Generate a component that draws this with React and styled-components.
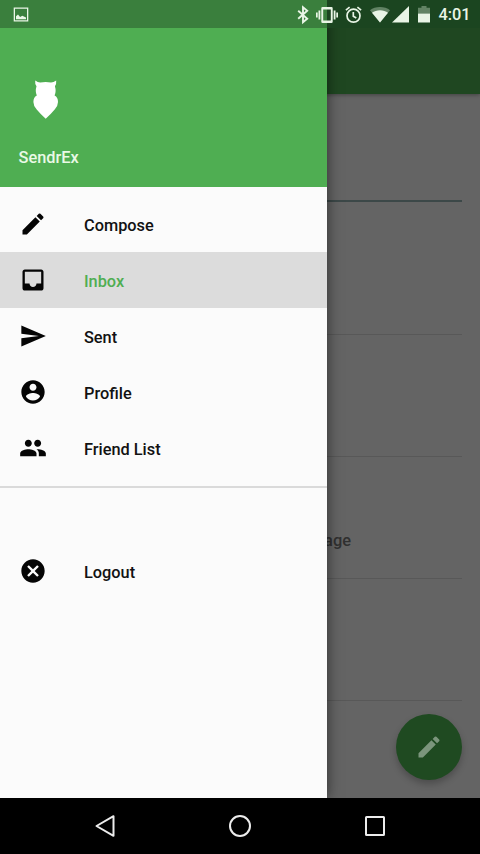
import React from "react";
import styled, { createGlobalStyle, css } from "styled-components";

const GlobalStyle = createGlobalStyle`
  *, *::before, *::after { box-sizing: border-box; }
  body { margin: 0; background: #000; }
`;

const Screen = styled.div`
  width: 480px;
  height: 854px;
  display: flex;
  flex-direction: column;
  overflow: hidden;
  font-family: Roboto, "Noto Sans", sans-serif;
  background: #000;
`;

const Stage = styled.div`
  position: relative;
  flex: none;
  height: 798px;
  overflow: hidden;
`;

const Page = styled.main`
  height: 100%;
  display: flex;
  flex-direction: column;
  background: #646464;
`;

const Toolbar = styled.header`
  flex: none;
  height: 94px;
  background: #1f4721;
  box-shadow: 0 1px 4px rgba(0, 0, 0, 0.35);
`;

const Field = styled.div`
  flex: none;
  height: ${(p) => p.$height}px;
  margin: 0 18px 0 19px;
  padding-bottom: 27px;
  display: flex;
  flex-direction: column;
  justify-content: flex-end;
  align-items: flex-end;
  border-bottom: 1px solid #585858;
  ${(p) =>
    p.$active &&
    css`
      border-bottom: 2px solid #3c4848;
    `}
`;

const FieldLabel = styled.span`
  margin-right: 111px;
  font-size: 16.4px;
  line-height: 20px;
  font-weight: 500;
  color: #303030;
`;

const Fab = styled.button`
  position: absolute;
  right: 18.5px;
  bottom: 18.5px;
  width: 66px;
  height: 66px;
  padding: 0;
  border: 0;
  border-radius: 50%;
  display: grid;
  place-items: center;
  background: #1f4a21;
  box-shadow: 0 4px 7px rgba(0, 0, 0, 0.24);
`;

const Drawer = styled.aside`
  position: absolute;
  top: 0;
  left: 0;
  bottom: 0;
  width: 326.6px;
  display: flex;
  flex-direction: column;
  background: #fbfbfb;
  box-shadow: 0 0 13px rgba(0, 0, 0, 0.55);
`;

const Brand = styled.div`
  flex: none;
  height: 187px;
  padding: 80px 18.6px 0;
  display: flex;
  flex-direction: column;
  background: #4fae52;
`;

const Owl = styled.svg`
  flex: none;
  width: 26px;
  height: 40px;
  margin-left: 14px;
`;

const BrandName = styled.div`
  margin-top: 28px;
  font-size: 16.33px;
  line-height: 20px;
  font-weight: 500;
  color: #e9f9e5;
`;

const Menu = styled.nav`
  padding-top: 9px;
`;

const Item = styled.a`
  height: 56px;
  padding-left: 18.67px;
  display: flex;
  align-items: center;
  gap: 37.33px;
  color: ${(p) => (p.$selected ? "#4fae52" : "#121212")};
  background: ${(p) => (p.$selected ? "#dcdcdc" : "transparent")};
`;

const ItemLabel = styled.span`
  padding-top: 3px;
  font-size: 16.33px;
  line-height: 20px;
  font-weight: 500;
`;

const Divider = styled.hr`
  width: 100%;
  height: 1.5px;
  margin: 10px 0 55.5px;
  border: 0;
  background: #dadada;
`;

const Icon = styled.svg`
  flex: none;
  width: 28px;
  height: 28px;
  fill: ${(p) => p.$color || "#050505"};
`;

const StatusBar = styled.div`
  position: absolute;
  top: 0;
  left: 0;
  right: 0;
  height: 28px;
  padding: 1px 9.5px 0 12px;
  display: flex;
  align-items: center;
  background: linear-gradient(to right, #3a7f3d 326.6px, #1b4520 326.6px);
`;

const StatusIcons = styled.div`
  margin-left: auto;
  display: flex;
  align-items: center;
`;

const StatusGlyph = styled.svg`
  flex: none;
  width: ${(p) => p.$w}px;
  height: 20px;
  margin-right: ${(p) => p.$gap || 0}px;
  fill: #e9f5e6;
`;

const Clock = styled.span`
  width: 32px;
  padding-top: 1px;
  font-size: 16.33px;
  line-height: 20px;
  font-weight: 500;
  color: #e9f5e6;
  white-space: nowrap;
`;

const NavBar = styled.footer`
  flex: 1;
  padding: 0 37.5px;
  display: grid;
  grid-template-columns: repeat(3, 1fr);
  place-items: center;
  background: #000;
`;

const NavGlyph = styled.svg`
  width: 28px;
  height: 28px;
  fill: none;
  stroke: #ececec;
  stroke-width: 2;
  stroke-linejoin: round;
`;

const PATHS = {
  edit: "M3 17.25V21h3.75L17.81 9.94l-3.75-3.75L3 17.25zM20.71 7.04a1 1 0 0 0 0-1.41l-2.34-2.34a1 1 0 0 0-1.41 0l-1.83 1.83 3.75 3.75 1.83-1.83z",
  inbox:
    "M19 3H4.99C3.88 3 3.01 3.89 3.01 5L3 19c0 1.1.88 2 1.99 2H19c1.1 0 2-.9 2-2V5c0-1.11-.9-2-2-2zm0 12h-4c0 1.66-1.35 3-3 3s-3-1.34-3-3H4.99V5H19v10z",
  send: "M2.01 21L23 12 2.01 3 2 10l15 2-15 2z",
  profile:
    "M12 2C6.48 2 2 6.48 2 12s4.48 10 10 10 10-4.48 10-10S17.52 2 12 2zm0 3c1.66 0 3 1.34 3 3s-1.34 3-3 3-3-1.34-3-3 1.34-3 3-3zm0 14.2c-2.5 0-4.71-1.28-6-3.22.03-1.99 4-3.08 6-3.08 1.99 0 5.97 1.09 6 3.08-1.29 1.94-3.5 3.22-6 3.22z",
  group:
    "M16 11c1.66 0 2.99-1.34 2.99-3S17.66 5 16 5s-3 1.34-3 3 1.34 3 3 3zm-8 0c1.66 0 2.99-1.34 2.99-3S9.66 5 8 5 5 6.34 5 8s1.34 3 3 3zm0 2c-2.33 0-7 1.17-7 3.5V19h14v-2.5c0-2.33-4.67-3.5-7-3.5zm8 0c-.29 0-.62.02-.97.05 1.16.84 1.97 1.97 1.97 3.45V19h6v-2.5c0-2.33-4.67-3.5-7-3.5z",
  cancel:
    "M12 2C6.47 2 2 6.47 2 12s4.47 10 10 10 10-4.47 10-10S17.53 2 12 2zm5 13.59L15.59 17 12 13.41 8.41 17 7 15.59 10.59 12 7 8.41 8.41 7 12 10.59 15.59 7 17 8.41 13.41 12 17 15.59z",
};

function Glyph({ name, color }) {
  return (
    <Icon viewBox="0 0 24 24" $color={color} aria-hidden="true">
      <path d={PATHS[name]} />
    </Icon>
  );
}

function MenuItem({ icon, label, selected }) {
  return (
    <Item $selected={selected}>
      <Glyph name={icon} />
      <ItemLabel>{label}</ItemLabel>
    </Item>
  );
}

function Status() {
  return (
    <StatusBar>
      <StatusGlyph $w={18} viewBox="0 0 18 20">
        <path
          fillRule="evenodd"
          d="M1.7 2.500h14.600v14H1.700zM3 3.800v11.400h12V3.800zM4 14.200v-3l2-1.800 2.100 2.500 2.200-1.200 3.700 1.900v1.600z"
        />
      </StatusGlyph>
      <StatusIcons>
        <StatusGlyph $w={12} $gap={7} viewBox="0 0 12 20">
          <path
            fill="none"
            stroke="#e9f5e6"
            strokeWidth="1.900"
            d="M1.200 5.800l9 8L6 17.300V2.300l4.200 3.500-9 8"
          />
        </StatusGlyph>
        <StatusGlyph $w={22} $gap={7} viewBox="0 0 22 20">
          <path
            fillRule="evenodd"
            d="M0 7.500h1.700v5H0zM2.500 5.500h1.800v9H2.500zM17.700 5.500h1.800v9h-1.800zM20.300 7.500H22v5h-1.700zM6.500 2h9q1.200 0 1.200 1.200v13.600q0 1.200-1.200 1.200h-9q-1.200 0-1.200-1.200V3.200q0-1.200 1.200-1.200zM7.200 4.500v11h7.600v-11z"
          />
        </StatusGlyph>
        <StatusGlyph $w={17} $gap={8} viewBox="0 0 17 20">
          <g fill="none" stroke="#e9f5e6" strokeWidth="1.700">
            <circle cx="8.500" cy="10.700" r="6.500" />
            <path d="M8.300 6.900v4.300l3 1.800M.9 5.200l3.700-3M16.100 5.200l-3.700-3" />
          </g>
        </StatusGlyph>
        <StatusGlyph $w={20} $gap={2} viewBox="0 0 20 20">
          <path
            opacity=".35"
            d="M10 17.500L0 5.200C2.600 3.100 6.100 2 10 2s7.400 1.100 10 3.200z"
          />
          <path d="M10 17.500L2 7.700C4.100 6.100 6.900 5.200 10 5.200s5.900.9 8 2.500z" />
        </StatusGlyph>
        <StatusGlyph $w={17} $gap={9} viewBox="0 0 17 20">
          <path d="M0 17.500L17 1V17.500z" />
        </StatusGlyph>
        <StatusGlyph $w={12} $gap={8.5} viewBox="0 0 12 20">
          <path opacity=".35" d="M3.500 1h5v1.800H12V8.500H0V2.800h3.500z" />
          <path d="M0 8.500h12v9H0z" />
        </StatusGlyph>
        <Clock>4:01</Clock>
      </StatusIcons>
    </StatusBar>
  );
}

export default function App() {
  return (
    <Screen>
      <GlobalStyle />
      <Stage>
        <Page>
          <Toolbar />
          <Field $height={108} $active />
          <Field $height={133} />
          <Field $height={122} />
          <Field $height={122}>
            <FieldLabel>Message</FieldLabel>
          </Field>
          <Field $height={122} />
        </Page>
        <Fab aria-label="Compose">
          <Glyph name="edit" color="#7b957c" />
        </Fab>
        <Drawer>
          <Brand>
            <Owl viewBox="0 0 26 40">
              <path
                fill="#fff"
                d="M2.200.6Q4.800 2.600 7.200 2.600Q12.700 1.200 18 2.600Q20.500 2.600 23.200.6Q23.600 4.500 21.900 6.300Q23.500 11.500 21.600 15.500Q25 17.300 25 22Q25 26 21.700 29.400Q17.300 34.600 12.700 38.700Q8.100 34.600 3.700 29.400Q.4 26 .4 22Q.4 17.300 3.800 15.500Q1.900 11.500 3.500 6.300Q1.800 4.500 2.200.6z"
              />
            </Owl>
            <BrandName>SendrEx</BrandName>
          </Brand>
          <Menu>
            <MenuItem icon="edit" label="Compose" />
            <MenuItem icon="inbox" label="Inbox" selected />
            <MenuItem icon="send" label="Sent" />
            <MenuItem icon="profile" label="Profile" />
            <MenuItem icon="group" label="Friend List" />
            <Divider />
            <MenuItem icon="cancel" label="Logout" />
          </Menu>
        </Drawer>
        <Status />
      </Stage>
      <NavBar>
        <NavGlyph viewBox="0 0 28 28">
          <path d="M5.500 14L22.500 4.200v19.600z" />
        </NavGlyph>
        <NavGlyph viewBox="0 0 28 28">
          <circle cx="14" cy="14" r="10" />
        </NavGlyph>
        <NavGlyph viewBox="0 0 28 28">
          <rect x="5" y="5" width="18" height="18" rx=".5" />
        </NavGlyph>
      </NavBar>
    </Screen>
  );
}
